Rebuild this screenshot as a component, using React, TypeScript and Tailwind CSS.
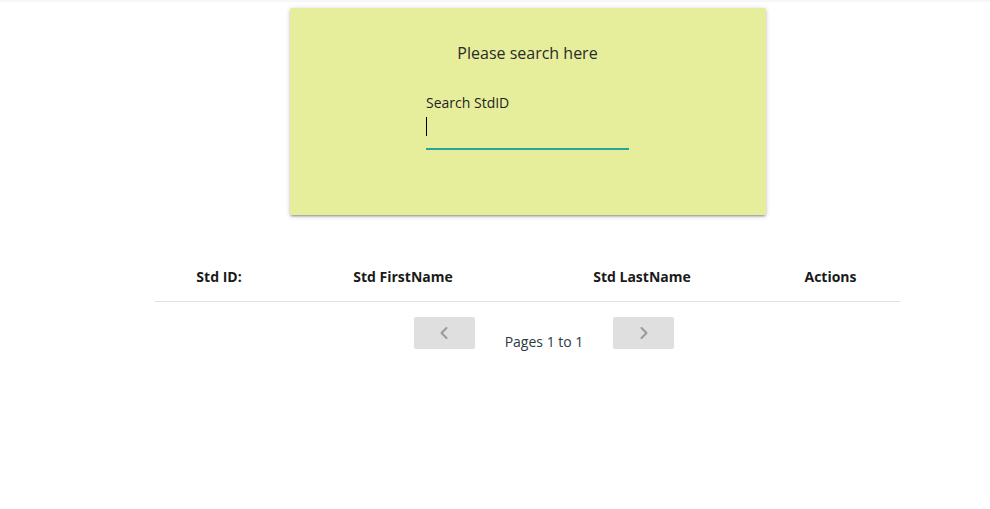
import { ChevronLeft, ChevronRight } from 'lucide-react';

const font = { fontFamily: '"Open Sans", "Noto Sans", sans-serif' };

export default function App() {
  return (
    <div className="min-h-screen bg-white text-[#222]" style={font}>
      <div className="h-[2px] bg-[#f6f6f6]" />
      <div className="ml-[155px] w-[745px] pt-[6px]">
        {/* Search card */}
        <div className="mx-auto w-[476px] h-[207px] bg-[#e6ee9c] rounded-[2px] shadow-[0_2px_2px_0_rgba(0,0,0,0.14),0_3px_1px_-2px_rgba(0,0,0,0.12),0_1px_5px_0_rgba(0,0,0,0.2)] flex flex-col items-center pt-[33px]">
          <h2 className="text-[16px] leading-[24px] font-medium text-[#2a2a2a]">Please search here</h2>
          <div className="w-[203px] mt-[28px]">
            <label className="block text-[14px] leading-[20px] text-[#1f1f1f]">Search StdID</label>
            <div className="relative h-[37px] border-b-2 border-[#26a69a]">
              <span className="absolute left-0 top-[4px] w-px h-[19px] bg-black" />
            </div>
          </div>
        </div>

        {/* Table */}
        <div className="mt-[36px] grid grid-cols-[128px_240px_238px_139px] h-[51px] items-center border-b border-[#e0e0e0] text-[14px] font-bold text-[#1a1a1a] text-center">
          <div>Std ID:</div>
          <div>Std FirstName</div>
          <div>Std LastName</div>
          <div>Actions</div>
        </div>

        {/* Pagination */}
        <div className="flex justify-center items-start gap-[30px] mt-[15px] pl-[33px]">
          <button className="w-[61px] h-[32px] bg-[#dfdfdf] rounded-[2px] flex items-center justify-center text-[#9a9a9a]">
            <ChevronLeft className="w-[20px] h-[20px]" strokeWidth={2.5} />
          </button>
          <span className="mt-[15px] text-[14px] leading-[20px] text-[#2b3a42]">Pages 1 to 1</span>
          <button className="w-[61px] h-[32px] bg-[#dfdfdf] rounded-[2px] flex items-center justify-center text-[#9a9a9a]">
            <ChevronRight className="w-[20px] h-[20px]" strokeWidth={2.5} />
          </button>
        </div>
      </div>
    </div>
  );
}
